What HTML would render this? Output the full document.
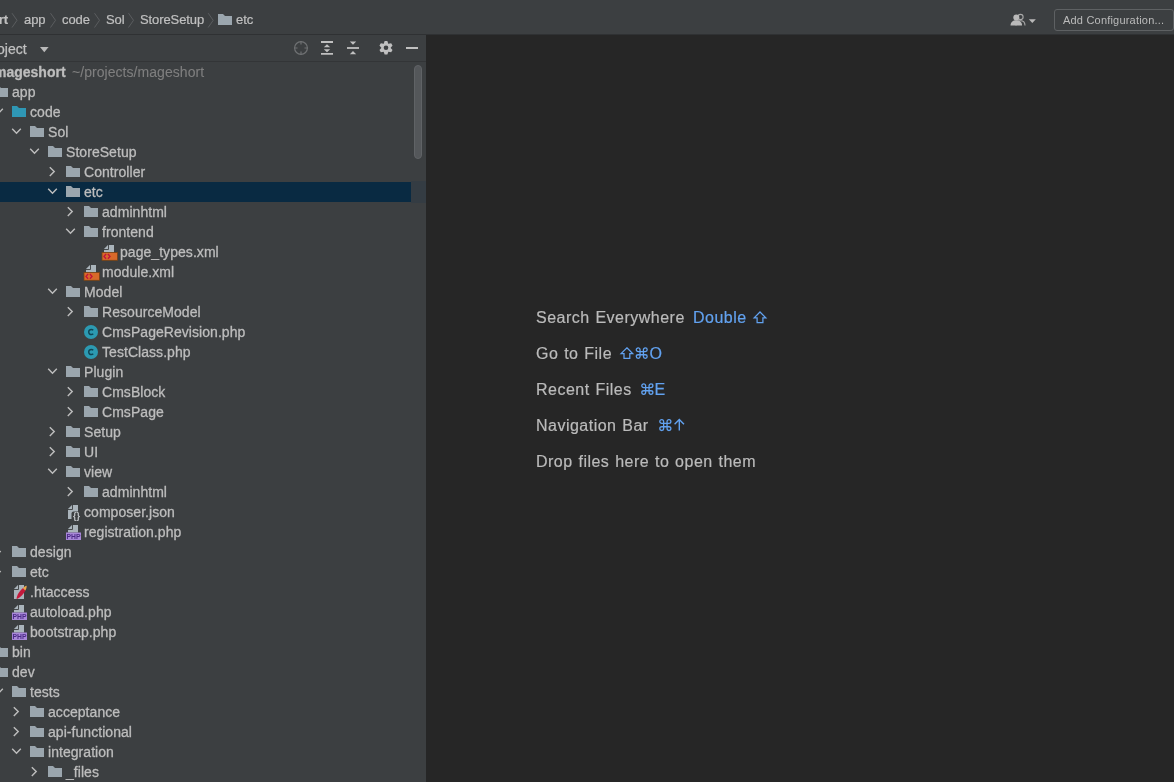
<!DOCTYPE html>
<html><head><meta charset="utf-8"><style>
html,body{margin:0;padding:0;}
body{width:1174px;height:782px;overflow:hidden;position:relative;background:#3c3f41;font-family:"Liberation Sans",sans-serif;color:#bbbbbb;}
.abs{position:absolute;}
#top{position:absolute;left:0;top:0;width:1174px;height:34px;will-change:transform;background:#3c3f41;border-bottom:1px solid #2f3133;}
#panel{position:absolute;left:0;top:35px;width:426px;height:747px;background:#3c3f41;overflow:hidden;will-change:transform;}
#phead{position:absolute;left:0;top:0;width:426px;height:26px;border-bottom:1px solid #333537;}
#editor{position:absolute;left:426px;top:35px;width:748px;height:747px;background:#262626;will-change:transform;}
#tree{position:absolute;left:0;top:-35px;width:426px;height:782px;will-change:transform;}
.t{position:absolute;height:20px;line-height:20px;font-size:14px;white-space:pre;letter-spacing:0.05px;color:#bdbdbd;margin-top:0px;-webkit-text-stroke:0.3px #bdbdbd;}
.b{font-weight:700;letter-spacing:0px}
.dim{color:#7f7f7f;-webkit-text-stroke:0.1px #7f7f7f;}
.bc{position:absolute;top:3px;height:34px;line-height:34px;font-size:13px;white-space:pre;letter-spacing:-0.1px;color:#c0c0c0;-webkit-text-stroke:0.2px #c0c0c0;}
.hint{position:absolute;left:110px;-webkit-text-stroke:0.2px #bbbbbb;font-size:16px;letter-spacing:0.49px;word-spacing:0.88px;white-space:pre;color:#bbbbbb;height:20px;line-height:20px;}
.key{position:absolute;-webkit-text-stroke:0.2px #62a2f0;font-size:16px;letter-spacing:0.49px;white-space:pre;color:#62a2f0;height:20px;line-height:20px;}
#sb{position:absolute;left:414px;top:30px;width:6px;height:92px;border-radius:4px;background:#54575a;border:1px solid #606366;}
</style></head><body>
<div id="top">
  <svg class="abs" style="left:0;top:0" width="1174" height="34" viewBox="0 0 1174 34"><path d="M12 13.2L17 20.3L12 27.5" stroke="#606264" stroke-width="0.85" fill="none"/><path d="M50.5 13.2L55.5 20.3L50.5 27.5" stroke="#606264" stroke-width="0.85" fill="none"/><path d="M94.5 13.2L99.5 20.3L94.5 27.5" stroke="#606264" stroke-width="0.85" fill="none"/><path d="M128.5 13.2L133.5 20.3L128.5 27.5" stroke="#606264" stroke-width="0.85" fill="none"/><path d="M208.2 13.2L213.2 20.3L208.2 27.5" stroke="#606264" stroke-width="0.85" fill="none"/><path d="M218 14h5l2 2h7v9h-14z" fill="#9ba6ae"/><circle cx="1020.5" cy="17" r="2.6" fill="none" stroke="#a9a9a9" stroke-width="1.1"/><path d="M1016 25.5c0-3 1.8-4.8 4.5-4.8s4.5 1.8 4.5 4.8" fill="none" stroke="#a9a9a9" stroke-width="1.1"/><circle cx="1016.3" cy="17.5" r="3" fill="#b9b9b9"/><path d="M1010.5 25.6c0-3.4 2.3-5.4 5.8-5.4s5.8 2 5.8 5.4z" fill="#b9b9b9"/><path d="M1028.8 19.3h7l-3.5 3.6z" fill="#b9b9b9"/></svg>
  <div class="bc" style="left:-9px;font-weight:700">ort</div>
  <div class="bc" style="left:24px">app</div>
  <div class="bc" style="left:62px">code</div>
  <div class="bc" style="left:106px">Sol</div>
  <div class="bc" style="left:140px">StoreSetup</div>
  <div class="bc" style="left:236px">etc</div>
  <div class="abs" style="left:1054px;top:9px;width:118px;height:20px;border:1px solid #5e6163;border-radius:3px;"></div>
  <div class="abs" style="left:1063px;top:9px;height:22px;line-height:22px;font-size:11px;letter-spacing:0.2px;white-space:pre">Add Configuration...</div>
</div>
<div id="panel">
  <div id="phead">
    <svg class="abs" style="left:0;top:0" width="426" height="27" viewBox="0 35 426 27"><path d="M40 47h8.6l-4.3 5.2z" fill="#b9b9b9"/><circle cx="301" cy="48" r="6.4" fill="none" stroke="#6f7173" stroke-width="1.2"/><path d="M301 41v3.5M301 51.5v3.5M294 48h3.5M304.5 48h3.5" stroke="#6f7173" stroke-width="1.2"/><path d="M321 42h12M321 53.8h12" stroke="#c0c0c0" stroke-width="1.8"/><path d="M323.8 47.3h6.4l-3.2-3z M323.8 49.2h6.4l-3.2 3z" fill="#c0c0c0"/><path d="M347 48h12" stroke="#c0c0c0" stroke-width="1.8"/><path d="M349.8 41.6h6.4l-3.2 3.2z M349.8 54.2h6.4l-3.2-3.2z" fill="#c0c0c0"/><g transform="translate(386 47.8)"><path d="M-2.25 -4.12L-1.37 -6.76L1.37 -6.76L2.25 -4.12L2.45 -4.01L5.17 -4.57L6.54 -2.19L4.70 -0.11L4.70 0.11L6.54 2.19L5.17 4.57L2.45 4.01L2.25 4.12L1.37 6.76L-1.37 6.76L-2.25 4.12L-2.45 4.01L-5.17 4.57L-6.54 2.19L-4.70 0.11L-4.70 -0.11L-6.54 -2.19L-5.17 -4.57L-2.45 -4.01Z" fill="#c0c0c0"/><circle r="2.3" fill="#3c3f41"/></g><path d="M406 48h12" stroke="#c0c0c0" stroke-width="2"/></svg>
    <div class="abs" style="left:-17px;top:1px;height:26px;line-height:26px;font-size:14px;letter-spacing:0px;white-space:pre;color:#c0c0c0;-webkit-text-stroke:0.25px #c0c0c0">Project</div>
  </div>
  <div id="tree">
<svg class="abs" style="left:0;top:0" width="426" height="782" viewBox="0 0 426 782"><path d="M-23.8 88.8L-19.5 93.2L-15.2 88.8" stroke="#bdbdbd" stroke-width="1.45" fill="none"/><path d="M-6 86h5l2 2h7v9h-14z" fill="#9ba6ae"/><path d="M-5.8 108.8L-1.5 113.2L2.8000000000000007 108.8" stroke="#bdbdbd" stroke-width="1.45" fill="none"/><path d="M12 106h5l2 2h7v9h-14z" fill="#2f97b5"/><path d="M12.2 128.8L16.5 133.2L20.8 128.8" stroke="#bdbdbd" stroke-width="1.45" fill="none"/><path d="M30 126h5l2 2h7v9h-14z" fill="#9ba6ae"/><path d="M30.2 148.8L34.5 153.2L38.8 148.8" stroke="#bdbdbd" stroke-width="1.45" fill="none"/><path d="M48 146h5l2 2h7v9h-14z" fill="#9ba6ae"/><path d="M49.8 167.3L54.2 171.6L49.8 175.9" stroke="#bdbdbd" stroke-width="1.45" fill="none"/><path d="M66 166h5l2 2h7v9h-14z" fill="#9ba6ae"/><rect x="0" y="182" width="411" height="20" fill="#092a42"/><rect x="411" y="181" width="15" height="22" fill="#343c43"/><path d="M48.2 188.8L52.5 193.2L56.8 188.8" stroke="#bdbdbd" stroke-width="1.45" fill="none"/><path d="M66 186h5l2 2h7v9h-14z" fill="#9ba6ae"/><path d="M67.8 207.3L72.2 211.6L67.8 215.9" stroke="#bdbdbd" stroke-width="1.45" fill="none"/><path d="M84 206h5l2 2h7v9h-14z" fill="#9ba6ae"/><path d="M66.2 228.8L70.5 233.2L74.8 228.8" stroke="#bdbdbd" stroke-width="1.45" fill="none"/><path d="M84 226h5l2 2h7v9h-14z" fill="#9ba6ae"/><path d="M108.5 245h5.5v7.5h-10v-3.0z" fill="#aab4bb"/><path d="M104.0 249l4 -4v4z" fill="#aab4bb"/><path d="M104.0 249.5h4.5v-4.5" stroke="#3c3f41" stroke-width="0.9" fill="none"/><rect x="102.0" y="252.5" width="15.5" height="7.8" fill="#d8692a" stroke="#7a4313" stroke-width="0.8"/><path d="M106.1 254l-2.1 2.4l2.1 2.4M107.9 254l2.1 2.4l-2.1 2.4" stroke="#c2143a" stroke-width="1.4" fill="none"/><path d="M90.5 265h5.5v7.5h-10v-3.0z" fill="#aab4bb"/><path d="M86.0 269l4 -4v4z" fill="#aab4bb"/><path d="M86.0 269.5h4.5v-4.5" stroke="#3c3f41" stroke-width="0.9" fill="none"/><rect x="84.0" y="272.5" width="15.5" height="7.8" fill="#d8692a" stroke="#7a4313" stroke-width="0.8"/><path d="M88.1 274l-2.1 2.4l2.1 2.4M89.9 274l2.1 2.4l-2.1 2.4" stroke="#c2143a" stroke-width="1.4" fill="none"/><path d="M48.2 288.8L52.5 293.2L56.8 288.8" stroke="#bdbdbd" stroke-width="1.45" fill="none"/><path d="M66 286h5l2 2h7v9h-14z" fill="#9ba6ae"/><path d="M67.8 307.3L72.2 311.6L67.8 315.9" stroke="#bdbdbd" stroke-width="1.45" fill="none"/><path d="M84 306h5l2 2h7v9h-14z" fill="#9ba6ae"/><circle cx="91" cy="332" r="7" fill="#2c9ab2"/><path d="M93.2 330.2A2.6 2.6 0 1 0 93.2 333.8" stroke="#0f4656" stroke-width="1.5" fill="none"/><circle cx="91" cy="352" r="7" fill="#2c9ab2"/><path d="M93.2 350.2A2.6 2.6 0 1 0 93.2 353.8" stroke="#0f4656" stroke-width="1.5" fill="none"/><path d="M48.2 368.8L52.5 373.2L56.8 368.8" stroke="#bdbdbd" stroke-width="1.45" fill="none"/><path d="M66 366h5l2 2h7v9h-14z" fill="#9ba6ae"/><path d="M67.8 387.3L72.2 391.6L67.8 395.9" stroke="#bdbdbd" stroke-width="1.45" fill="none"/><path d="M84 386h5l2 2h7v9h-14z" fill="#9ba6ae"/><path d="M67.8 407.3L72.2 411.6L67.8 415.9" stroke="#bdbdbd" stroke-width="1.45" fill="none"/><path d="M84 406h5l2 2h7v9h-14z" fill="#9ba6ae"/><path d="M49.8 427.3L54.2 431.6L49.8 435.9" stroke="#bdbdbd" stroke-width="1.45" fill="none"/><path d="M66 426h5l2 2h7v9h-14z" fill="#9ba6ae"/><path d="M49.8 447.3L54.2 451.6L49.8 455.9" stroke="#bdbdbd" stroke-width="1.45" fill="none"/><path d="M66 446h5l2 2h7v9h-14z" fill="#9ba6ae"/><path d="M48.2 468.8L52.5 473.2L56.8 468.8" stroke="#bdbdbd" stroke-width="1.45" fill="none"/><path d="M66 466h5l2 2h7v9h-14z" fill="#9ba6ae"/><path d="M67.8 487.3L72.2 491.6L67.8 495.9" stroke="#bdbdbd" stroke-width="1.45" fill="none"/><path d="M84 486h5l2 2h7v9h-14z" fill="#9ba6ae"/><path d="M72.5 505h5.5v14h-10v-9.5z" fill="#aab4bb"/><path d="M68 509l4 -4v4z" fill="#aab4bb"/><path d="M68 509.5h4.5v-4.5" stroke="#3c3f41" stroke-width="0.9" fill="none"/><rect x="71.5" y="511.5" width="10" height="9" rx="2" fill="#3c3f41"/><text x="76.4" y="519.2" font-family="Liberation Sans" font-size="9" font-weight="700" fill="#c4c8cb" text-anchor="middle">{}</text><path d="M72.5 525h5.5v7.5h-10v-3.0z" fill="#aab4bb"/><path d="M68 529l4 -4v4z" fill="#aab4bb"/><path d="M68 529.5h4.5v-4.5" stroke="#3c3f41" stroke-width="0.9" fill="none"/><rect x="66" y="532.5" width="15" height="7.5" fill="#a887d8"/><text x="73.5" y="539.1" font-family="Liberation Sans" font-size="7.2" font-weight="700" fill="#4b2a86" text-anchor="middle" textLength="14" lengthAdjust="spacingAndGlyphs">PHP</text><path d="M-4.2 547.3L0.20000000000000018 551.6L-4.2 555.9" stroke="#bdbdbd" stroke-width="1.45" fill="none"/><path d="M12 546h5l2 2h7v9h-14z" fill="#9ba6ae"/><path d="M-4.2 567.3L0.20000000000000018 571.6L-4.2 575.9" stroke="#bdbdbd" stroke-width="1.45" fill="none"/><path d="M12 566h5l2 2h7v9h-14z" fill="#9ba6ae"/><path d="M18.5 585h5.5v14h-10v-9.5z" fill="#aab4bb"/><path d="M14 589l4 -4v4z" fill="#aab4bb"/><path d="M14 589.5h4.5v-4.5" stroke="#3c3f41" stroke-width="0.9" fill="none"/><path d="M16.6 599.2C16.6 595 20 590 24 587.5L25.5 590.5C23.5 594.5 20 597.5 16.6 599.2z" fill="#c41a3c"/><path d="M23 588.2C24 586.8 25.5 585.8 26.6 585.8C26.8 587.4 26.2 589.5 25.2 590.6z" fill="#e9a94a"/><path d="M18.5 605h5.5v7.5h-10v-3.0z" fill="#aab4bb"/><path d="M14 609l4 -4v4z" fill="#aab4bb"/><path d="M14 609.5h4.5v-4.5" stroke="#3c3f41" stroke-width="0.9" fill="none"/><rect x="12" y="612.5" width="15" height="7.5" fill="#a887d8"/><text x="19.5" y="619.1" font-family="Liberation Sans" font-size="7.2" font-weight="700" fill="#4b2a86" text-anchor="middle" textLength="14" lengthAdjust="spacingAndGlyphs">PHP</text><path d="M18.5 625h5.5v7.5h-10v-3.0z" fill="#aab4bb"/><path d="M14 629l4 -4v4z" fill="#aab4bb"/><path d="M14 629.5h4.5v-4.5" stroke="#3c3f41" stroke-width="0.9" fill="none"/><rect x="12" y="632.5" width="15" height="7.5" fill="#a887d8"/><text x="19.5" y="639.1" font-family="Liberation Sans" font-size="7.2" font-weight="700" fill="#4b2a86" text-anchor="middle" textLength="14" lengthAdjust="spacingAndGlyphs">PHP</text><path d="M-22.2 647.3L-17.8 651.6L-22.2 655.9" stroke="#bdbdbd" stroke-width="1.45" fill="none"/><path d="M-6 646h5l2 2h7v9h-14z" fill="#9ba6ae"/><path d="M-23.8 668.8L-19.5 673.2L-15.2 668.8" stroke="#bdbdbd" stroke-width="1.45" fill="none"/><path d="M-6 666h5l2 2h7v9h-14z" fill="#9ba6ae"/><path d="M-5.8 688.8L-1.5 693.2L2.8000000000000007 688.8" stroke="#bdbdbd" stroke-width="1.45" fill="none"/><path d="M12 686h5l2 2h7v9h-14z" fill="#9ba6ae"/><path d="M13.8 707.3L18.2 711.6L13.8 715.9" stroke="#bdbdbd" stroke-width="1.45" fill="none"/><path d="M30 706h5l2 2h7v9h-14z" fill="#9ba6ae"/><path d="M13.8 727.3L18.2 731.6L13.8 735.9" stroke="#bdbdbd" stroke-width="1.45" fill="none"/><path d="M30 726h5l2 2h7v9h-14z" fill="#9ba6ae"/><path d="M12.2 748.8L16.5 753.2L20.8 748.8" stroke="#bdbdbd" stroke-width="1.45" fill="none"/><path d="M30 746h5l2 2h7v9h-14z" fill="#9ba6ae"/><path d="M31.8 767.3L36.2 771.6L31.8 775.9" stroke="#bdbdbd" stroke-width="1.45" fill="none"/><path d="M48 766h5l2 2h7v9h-14z" fill="#9ba6ae"/></svg>
<div class="t b" style="left:-6px;top:62px">mageshort</div><div class="t dim" style="left:72px;top:62px">~/projects/mageshort</div>
<div class="t" style="left:12px;top:82px">app</div>
<div class="t" style="left:30px;top:102px">code</div>
<div class="t" style="left:48px;top:122px">Sol</div>
<div class="t" style="left:66px;top:142px">StoreSetup</div>
<div class="t" style="left:84px;top:162px">Controller</div>
<div class="t" style="left:84px;top:182px">etc</div>
<div class="t" style="left:102px;top:202px">adminhtml</div>
<div class="t" style="left:102px;top:222px">frontend</div>
<div class="t" style="left:120px;top:242px">page_types.xml</div>
<div class="t" style="left:102px;top:262px">module.xml</div>
<div class="t" style="left:84px;top:282px">Model</div>
<div class="t" style="left:102px;top:302px">ResourceModel</div>
<div class="t" style="left:102px;top:322px">CmsPageRevision.php</div>
<div class="t" style="left:102px;top:342px">TestClass.php</div>
<div class="t" style="left:84px;top:362px">Plugin</div>
<div class="t" style="left:102px;top:382px">CmsBlock</div>
<div class="t" style="left:102px;top:402px">CmsPage</div>
<div class="t" style="left:84px;top:422px">Setup</div>
<div class="t" style="left:84px;top:442px">UI</div>
<div class="t" style="left:84px;top:462px">view</div>
<div class="t" style="left:102px;top:482px">adminhtml</div>
<div class="t" style="left:84px;top:502px">composer.json</div>
<div class="t" style="left:84px;top:522px">registration.php</div>
<div class="t" style="left:30px;top:542px">design</div>
<div class="t" style="left:30px;top:562px">etc</div>
<div class="t" style="left:30px;top:582px">.htaccess</div>
<div class="t" style="left:30px;top:602px">autoload.php</div>
<div class="t" style="left:30px;top:622px">bootstrap.php</div>
<div class="t" style="left:12px;top:642px">bin</div>
<div class="t" style="left:12px;top:662px">dev</div>
<div class="t" style="left:30px;top:682px">tests</div>
<div class="t" style="left:48px;top:702px">acceptance</div>
<div class="t" style="left:48px;top:722px">api-functional</div>
<div class="t" style="left:48px;top:742px">integration</div>
<div class="t" style="left:66px;top:762px">_files</div>
  </div>
  <div id="sb"></div>
</div>
<div id="editor">
  <div class="hint" style="top:273px">Search Everywhere</div>
  <div class="key" style="left:267px;top:273px">Double</div>
  <div class="key" style="left:223.5px;top:309px">O</div>
  <div class="key" style="left:228.5px;top:345px">E</div>
  <svg class="abs" style="left:0;top:0" width="748" height="747" viewBox="426 35 748 747"><path d="M760.0 312.0L765.8 317.8H762.9V322.5H757.0999999999999V317.8H754.1999999999999Z" stroke="#62a2f0" stroke-width="1.25" fill="none" stroke-linejoin="miter"/><path d="M626.9000000000001 347.8L632.7 353.6H629.8000000000001V358.3H624.0V353.6H621.1Z" stroke="#62a2f0" stroke-width="1.25" fill="none" stroke-linejoin="miter"/><g transform="translate(636.11 347.78) scale(0.9384615384615385 0.8923076923076922)"><path d="M4.2 4.2V2.2A2 2 0 1 0 2.2 4.2H9.8A2 2 0 1 0 7.8 2.2V9.8A2 2 0 1 0 9.8 7.8H2.2A2 2 0 1 0 4.2 9.8Z" stroke="#62a2f0" stroke-width="1.3" fill="none" vector-effect="non-scaling-stroke"/></g><g transform="translate(641.62 383.78) scale(0.9538461538461539 0.8923076923076922)"><path d="M4.2 4.2V2.2A2 2 0 1 0 2.2 4.2H9.8A2 2 0 1 0 7.8 2.2V9.8A2 2 0 1 0 9.8 7.8H2.2A2 2 0 1 0 4.2 9.8Z" stroke="#62a2f0" stroke-width="1.3" fill="none" vector-effect="non-scaling-stroke"/></g><g transform="translate(659.62 419.41) scale(0.9538461538461539 0.9384615384615385)"><path d="M4.2 4.2V2.2A2 2 0 1 0 2.2 4.2H9.8A2 2 0 1 0 7.8 2.2V9.8A2 2 0 1 0 9.8 7.8H2.2A2 2 0 1 0 4.2 9.8Z" stroke="#62a2f0" stroke-width="1.3" fill="none" vector-effect="non-scaling-stroke"/></g><path d="M679.3 430.6V419.6M674.5999999999999 424.3L679.3 419.6L684.0 424.3" stroke="#62a2f0" stroke-width="1.4" fill="none"/></svg>
  <div class="hint" style="top:309px">Go to File</div>
  <div class="hint" style="top:345px">Recent Files</div>
  <div class="hint" style="top:381px">Navigation Bar</div>
  <div class="hint" style="top:417px">Drop files here to open them</div>
</div>
</body></html>
